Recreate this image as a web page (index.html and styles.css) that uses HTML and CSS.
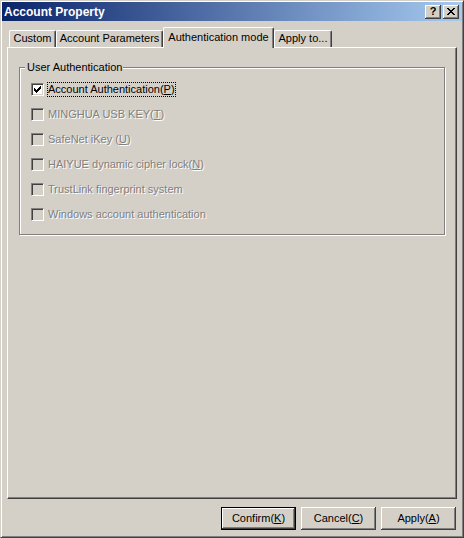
FILE: index.html
```html
<!DOCTYPE html>
<html>
<head>
<meta charset="utf-8">
<title>Account Property</title>
<link rel="stylesheet" href="styles.css">
</head>
<body>
<div class="window">
  <div class="titlebar">
    <span class="title">Account Property</span>
    <div class="caption-btns">
      <div class="cap-btn help">?</div>
      <div class="cap-btn close">
        <svg width="8" height="7" viewBox="0 0 8 7" shape-rendering="crispEdges"><path fill="#000" d="M0 0h2v1h-2z M6 0h2v1h-2z M1 1h2v1h-2z M5 1h2v1h-2z M2 2h4v1h-4z M3 3h2v1h-2z M2 4h4v1h-4z M1 5h2v1h-2z M5 5h2v1h-2z M0 6h2v1h-2z M6 6h2v1h-2z"/></svg>
      </div>
    </div>
  </div>
  <div class="tabs">
    <div class="tab tab-custom">Custom</div>
    <div class="tab tab-params">Account Parameters</div>
    <div class="tab tab-auth active">Authentication mode</div>
    <div class="tab tab-apply">Apply to...</div>
  </div>
  <div class="panel">
    <div class="group">
      <span class="group-label">User Authentication</span>
      <div class="rows">
        <div class="row">
          <span class="cb"><svg width="7" height="7" viewBox="0 0 7 7" shape-rendering="crispEdges"><path fill="#000" d="M6 0h1v1h-1z M5 1h2v1h-2z M0 2h1v1h-1z M4 2h3v1h-3z M0 3h2v1h-2z M3 3h3v1h-3z M0 4h5v1h-5z M1 5h3v1h-3z M2 6h1v1h-1z"/></svg></span>
          <span class="lbl focus">Account Authentication(<u>P</u>)</span>
        </div>
        <div class="row disabled">
          <span class="cb"></span>
          <span class="lbl">MINGHUA USB KEY(<u>T</u>)</span>
        </div>
        <div class="row disabled">
          <span class="cb"></span>
          <span class="lbl">SafeNet iKey (<u>U</u>)</span>
        </div>
        <div class="row disabled">
          <span class="cb"></span>
          <span class="lbl">HAIYUE dynamic cipher lock(<u>N</u>)</span>
        </div>
        <div class="row disabled">
          <span class="cb"></span>
          <span class="lbl">TrustLink fingerprint system</span>
        </div>
        <div class="row disabled">
          <span class="cb"></span>
          <span class="lbl">Windows account authentication</span>
        </div>
      </div>
    </div>
  </div>
  <div class="buttons">
    <div class="btn default">Confirm(<u>K</u>)</div>
    <div class="btn">Cancel(<u>C</u>)</div>
    <div class="btn">Apply(<u>A</u>)</div>
  </div>
</div>
</body>
</html>
```
FILE: styles.css
```css
* { box-sizing: border-box; }
html, body {
  margin: 0;
  padding: 0;
  background: #d4d0c8;
}
body {
  font-family: "Liberation Sans", Arial, sans-serif;
  font-size: 11px;
  color: #000;
}
.window {
  width: 464px;
  height: 538px;
  display: flex;
  flex-direction: column;
  background: #d4d0c8;
  border-top: 1px solid #d4d0c8;
  border-left: 1px solid #d4d0c8;
  border-right: 1px solid #404040;
  border-bottom: 1px solid #404040;
  padding: 1px;
  box-shadow: inset 1px 1px 0 #ffffff, inset -1px -1px 0 #808080;
}
.titlebar {
  height: 19px;
  flex: 0 0 19px;
  display: flex;
  align-items: center;
  justify-content: space-between;
  background: linear-gradient(to right, #0a246a, #a6caf0);
  padding: 0 3px 0 2px;
}
.title {
  color: #fff;
  font-weight: bold;
  font-size: 12px;
  line-height: 14px;
}
.caption-btns {
  display: flex;
  gap: 2px;
}
.cap-btn {
  width: 16px;
  height: 14px;
  background: #d4d0c8;
  box-shadow: inset -1px -1px 0 #404040, inset 1px 1px 0 #ffffff, inset -2px -2px 0 #808080;
  display: flex;
  align-items: center;
  justify-content: center;
  font-weight: bold;
  font-size: 11px;
  line-height: 11px;
}
.cap-btn.help { padding-bottom: 1px; }
.cap-btn.close { padding: 0 1px 1px 0; }
.tabs {
  flex: 0 0 26px;
  height: 26px;
  display: flex;
  align-items: flex-end;
  padding-left: 7px;
}
.tab {
  height: 17px;
  line-height: 15px;
  text-align: center;
  background: #d4d0c8;
  border-left: 1px solid #ffffff;
  border-top: 1px solid #ffffff;
  border-right: 1px solid #404040;
  border-top-left-radius: 2px;
  border-top-right-radius: 2px;
  box-shadow: inset -1px 0 0 #808080;
  white-space: nowrap;
}
.tab-custom { width: 47px; }
.tab-params { width: 107px; }
.tab-auth { width: 111px; }
.tab-apply { width: 58px; }
.tab.active {
  height: 21px;
  line-height: 18px;
  margin-bottom: -1px;
  position: relative;
  z-index: 1;
}
.panel {
  flex: 1;
  margin: 0 5px;
  border-top: 1px solid #ffffff;
  border-left: 1px solid #ffffff;
  border-right: 1px solid #404040;
  border-bottom: 1px solid #404040;
  box-shadow: inset -1px -1px 0 #808080;
  padding: 19px 11px 0 11px;
}
.group {
  height: 168px;
  border: 1px solid #808080;
  box-shadow: inset 1px 1px 0 #ffffff, 1px 1px 0 #ffffff;
  padding: 0 0 0 11px;
}
.group-label {
  display: block;
  width: fit-content;
  margin: -7px 0 0 -6px;
  padding: 0 1px 0 2px;
  line-height: 13px;
  background: #d4d0c8;
}
.rows {
  display: flex;
  flex-direction: column;
  gap: 12px;
  margin-top: 9px;
}
.row {
  height: 13px;
  display: flex;
  align-items: center;
}
.cb {
  width: 13px;
  height: 13px;
  flex: 0 0 13px;
  border-top: 1px solid #808080;
  border-left: 1px solid #808080;
  border-right: 1px solid #ffffff;
  border-bottom: 1px solid #ffffff;
  box-shadow: inset 1px 1px 0 #404040, inset -1px -1px 0 #d4d0c8;
  background: #ffffff;
  padding: 2px;
  display: flex;
}
.cb svg { display: block; }
.lbl {
  margin-left: 3px;
  border: 1px solid transparent;
  line-height: 13px;
  white-space: nowrap;
}
.lbl.focus {
  border: 1px dotted #000;
}
.row.disabled .cb { background: #d4d0c8; }
.row.disabled .lbl {
  color: #808080;
  text-shadow: 1px 1px 0 #ffffff;
}
.buttons {
  flex: 0 0 23px;
  display: flex;
  justify-content: flex-end;
  gap: 5px;
  margin: 8px 6px 6px 0;
}
.btn {
  width: 75px;
  height: 23px;
  display: flex;
  align-items: center;
  justify-content: center;
  background: #d4d0c8;
  box-shadow: inset -1px -1px 0 #404040, inset 1px 1px 0 #ffffff, inset -2px -2px 0 #808080;
  padding-bottom: 1px;
}
.btn.default {
  border: 1px solid #000;
  box-shadow: inset -1px -1px 0 #404040, inset 1px 1px 0 #ffffff, inset -2px -2px 0 #808080;
}
```
